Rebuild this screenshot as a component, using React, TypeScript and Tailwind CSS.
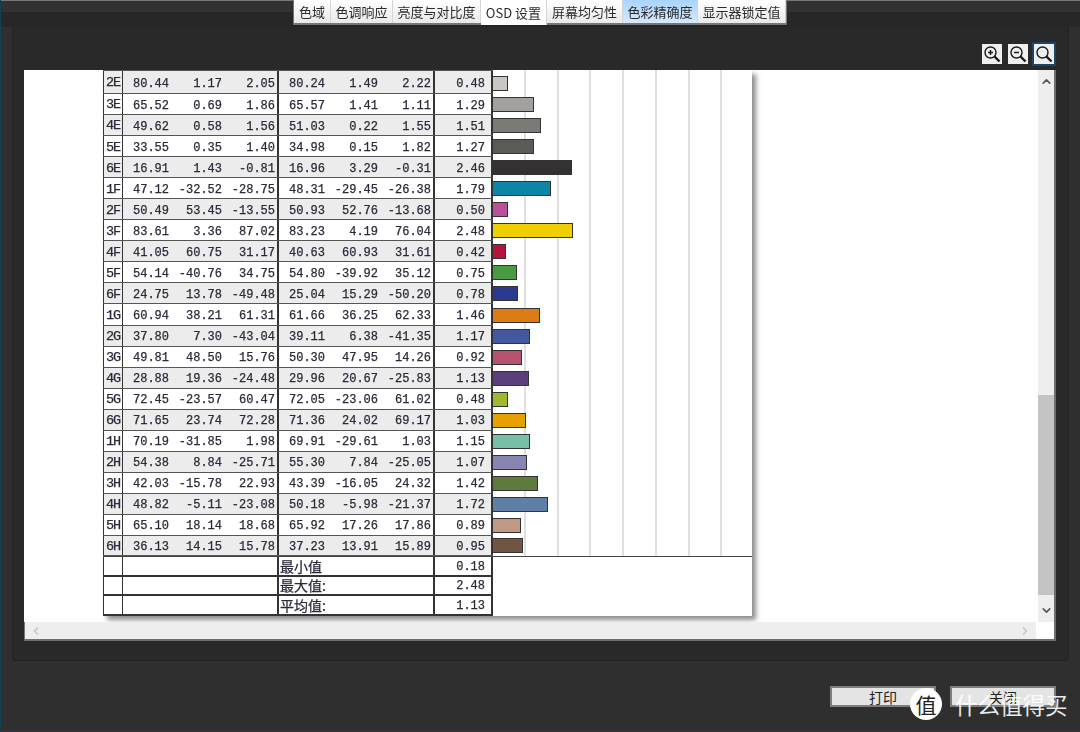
import { ChevronDown, ChevronLeft, ChevronRight, ChevronUp } from 'lucide-react';

const tabs = [
  { label: '色域', w: 37 },
  { label: '色调响应', w: 62 },
  { label: '亮度与对比度', w: 88 },
  { label: 'OSD 设置', w: 66, active: true },
  { label: '屏幕均匀性', w: 76 },
  { label: '色彩精确度', w: 75, hot: true },
  { label: '显示器锁定值', w: 88 },
];

type Row = [string, string, string, string, string, string, string, string];

const rows: { r: Row; color: string }[] = [
  { r: ['2E', '80.44', '1.17', '2.05', '80.24', '1.49', '2.22', '0.48'], color: '#c9c6c3' },
  { r: ['3E', '65.52', '0.69', '1.86', '65.57', '1.41', '1.11', '1.29'], color: '#a3a09e' },
  { r: ['4E', '49.62', '0.58', '1.56', '51.03', '0.22', '1.55', '1.51'], color: '#7a7a77' },
  { r: ['5E', '33.55', '0.35', '1.40', '34.98', '0.15', '1.82', '1.27'], color: '#5a5a56' },
  { r: ['6E', '16.91', '1.43', '-0.81', '16.96', '3.29', '-0.31', '2.46'], color: '#333132' },
  { r: ['1F', '47.12', '-32.52', '-28.75', '48.31', '-29.45', '-26.38', '1.79'], color: '#0d85a6' },
  { r: ['2F', '50.49', '53.45', '-13.55', '50.93', '52.76', '-13.68', '0.50'], color: '#bb4f9c' },
  { r: ['3F', '83.61', '3.36', '87.02', '83.23', '4.19', '76.04', '2.48'], color: '#efcf00' },
  { r: ['4F', '41.05', '60.75', '31.17', '40.63', '60.93', '31.61', '0.42'], color: '#b5133c' },
  { r: ['5F', '54.14', '-40.76', '34.75', '54.80', '-39.92', '35.12', '0.75'], color: '#4a9a42' },
  { r: ['6F', '24.75', '13.78', '-49.48', '25.04', '15.29', '-50.20', '0.78'], color: '#2a3a8e' },
  { r: ['1G', '60.94', '38.21', '61.31', '61.66', '36.25', '62.33', '1.46'], color: '#dc7a14' },
  { r: ['2G', '37.80', '7.30', '-43.04', '39.11', '6.38', '-41.35', '1.17'], color: '#44589f' },
  { r: ['3G', '49.81', '48.50', '15.76', '50.30', '47.95', '14.26', '0.92'], color: '#b6516e' },
  { r: ['4G', '28.88', '19.36', '-24.48', '29.96', '20.67', '-25.83', '1.13'], color: '#5a3f7c' },
  { r: ['5G', '72.45', '-23.57', '60.47', '72.05', '-23.06', '61.02', '0.48'], color: '#9cba2c' },
  { r: ['6G', '71.65', '23.74', '72.28', '71.36', '24.02', '69.17', '1.03'], color: '#e6a000' },
  { r: ['1H', '70.19', '-31.85', '1.98', '69.91', '-29.61', '1.03', '1.15'], color: '#78bfa8' },
  { r: ['2H', '54.38', '8.84', '-25.71', '55.30', '7.84', '-25.05', '1.07'], color: '#8884b4' },
  { r: ['3H', '42.03', '-15.78', '22.93', '43.39', '-16.05', '24.32', '1.42'], color: '#5e7a3c' },
  { r: ['4H', '48.82', '-5.11', '-23.08', '50.18', '-5.98', '-21.37', '1.72'], color: '#5f7fa6' },
  { r: ['5H', '65.10', '18.14', '18.68', '65.92', '17.26', '17.86', '0.89'], color: '#c09a84' },
  { r: ['6H', '36.13', '14.15', '15.78', '37.23', '13.91', '15.89', '0.95'], color: '#715543' },
];

const summary = [
  ['最小值', '0.18'],
  ['最大值:', '2.48'],
  ['平均值:', '1.13'],
];

const gridLines = [32, 65, 97, 130, 163, 196, 228];

const ZoomIcon = ({ mark }: { mark?: 'plus' | 'minus' }) => (
  <svg width="18" height="18" viewBox="0 0 18 18" fill="none" stroke="#1a1a1a">
    <circle cx="7.5" cy="7.5" r="5.5" strokeWidth="1.4" />
    <path d="M11.5 11.5L16.5 16.5" strokeWidth="2.4" />
    {mark && <path d="M5 7.5H10" strokeWidth="1.5" />}
    {mark === 'plus' && <path d="M7.5 5V10" strokeWidth="1.5" />}
  </svg>
);

const Num = ({ w, children }: { w: string; children: string }) => (
  <span className={`${w} text-right`}>{children}</span>
);

export default function App() {
  return (
    <div className="relative flex h-[732px] w-[1080px] flex-col overflow-hidden border-b border-l border-[#123f52] bg-[#2f2f2f] font-['Noto_Sans_CJK_SC',sans-serif]">
      <div className="flex h-[27px] border-t border-[#777] bg-[linear-gradient(#323232_11px,#272727_11px)] pl-[292px]">
        <div className="-mt-px flex h-[25px] items-stretch border-b-2 border-l border-r border-[#777] shadow-[0_1px_1px_#222] blur-[0.3px]">
          {tabs.map((t) => (
            <div
              key={t.label}
              style={{ width: t.w }}
              className={
                'flex items-center justify-center border-r border-[#d5d5d5] text-[13px] leading-none text-[#2a2a2a] ' +
                (t.active ? 'h-[25px] bg-white' : t.hot ? 'bg-gradient-to-b from-[#a9d4fb] to-[#d5e9fc]' : 'bg-gradient-to-b from-[#ffffff] to-[#e9e9e9]')
              }
            >
              {t.label}
            </div>
          ))}
        </div>
      </div>

      <div className="mx-[11px] flex h-[634px] flex-col rounded-b-[4px] border border-t-0 border-[#232323] bg-[#292929]">
        <div className="flex h-[43px] items-end justify-end gap-[6px] pb-[6px] pr-[14px]">
          <div className="flex h-[20px] w-[20px] items-center justify-center bg-[#efefef]"><ZoomIcon mark="plus" /></div>
          <div className="flex h-[20px] w-[20px] items-center justify-center bg-[#efefef]"><ZoomIcon mark="minus" /></div>
          <div className="flex h-[20px] w-[20px] items-center justify-center bg-[#efefef] outline-2 outline-[#1d4466]"><ZoomIcon /></div>
        </div>

        <div className="ml-[11px] mr-[12px] flex h-[571px] flex-col border-b-2 border-r-2 border-[#6e6e6e] bg-white">
          <div className="flex h-[552px]">
            <div className="relative min-w-0 flex-1 overflow-hidden bg-white pl-[79px]">
              <div className="relative w-[649px] shadow-[4px_4px_5px_rgba(0,0,0,0.45)]">
                <div className="absolute bottom-0 left-[389px] top-0 w-[260px]">
                  {gridLines.map((x) => (
                    <div key={x} style={{ left: x }} className="absolute bottom-[59px] top-0 w-[2px] bg-[#e0e0e0]" />
                  ))}
                </div>
                <div className="relative font-['Liberation_Mono','Noto_Sans_CJK_SC',monospace] text-[12px] text-[#2a2a3a] blur-[0.3px] [-webkit-text-stroke:0.25px_#2a2a3a]">
                  {rows.map(({ r, color }, i) => (
                    <div
                      key={r[0]}
                      style={{ height: i === 0 ? 24 : 21.05 }}
                      className={'flex ' + (i === rows.length - 1 ? 'border-b-[1.5px] border-[#444]' : '')}
                    >
                      <div className={'flex w-[390px] border-b-[1.5px] border-[#555] ' + (i === 0 ? 'border-t-[1.5px] ' : '') + (i % 2 === 0 ? 'bg-[#ececec]' : 'bg-white')}>
                        <span className="flex w-[20px] items-center justify-center border-l-[1.5px] border-r-[1.5px] border-[#333] pt-[3px] text-[13.5px] tracking-[-1px]">{r[0]}</span>
                        <div className="flex w-[156px] items-center border-r-2 border-[#333] pt-[3px]">
                          <Num w="w-[46px]">{r[1]}</Num>
                          <Num w="w-[53px]">{r[2]}</Num>
                          <Num w="w-[53px]">{r[3]}</Num>
                        </div>
                        <div className="flex w-[156px] items-center border-r-2 border-[#333] pt-[3px]">
                          <Num w="w-[46px]">{r[4]}</Num>
                          <Num w="w-[53px]">{r[5]}</Num>
                          <Num w="w-[53px]">{r[6]}</Num>
                        </div>
                        <div className="flex w-[58px] items-center justify-end border-r-2 border-[#333] pr-[6px] pt-[3px]">{r[7]}</div>
                      </div>
                      <div className="flex flex-1 items-end pb-[3px]">
                        <div
                          style={{ width: parseFloat(r[7]) * 32.7, backgroundColor: color }}
                          className="-ml-[1px] h-[15px] border-[1.5px] border-[#333]"
                        />
                      </div>
                    </div>
                  ))}
                  {summary.map(([label, val]) => (
                    <div key={label} className="flex h-[19.5px]">
                      <div className="flex w-[390px] border-b-2 border-[#333]">
                        <span className="w-[20px] border-l-[1.5px] border-r-[1.5px] border-[#333]" />
                        <span className="w-[156px] border-r-2 border-[#333]" />
                        <span className="flex w-[156px] items-center border-r-2 border-[#333] pl-[1px] font-['Noto_Sans_CJK_SC',sans-serif] text-[14px] leading-none">{label}</span>
                        <span className="flex w-[58px] items-center justify-end border-r-2 border-[#333] pr-[6px] pt-[2px]">{val}</span>
                      </div>
                      <div className="flex-1 bg-white" />
                    </div>
                  ))}
                </div>
              </div>
            </div>
            <div className="relative flex w-[16px] flex-col items-center justify-between bg-[#eeeeee] py-[5px]">
              <ChevronUp size={13} strokeWidth={3} className="text-[#555]" />
              <div className="absolute left-0 top-[325px] h-[200px] w-full bg-[#c4c4c4]" />
              <ChevronDown size={13} strokeWidth={3} className="text-[#555]" />
            </div>
          </div>
          <div className="flex h-[17px]">
            <div className="flex flex-1 items-center justify-between border-l-[1.5px] border-[#777] bg-[#eeeeee] px-[5px]">
              <ChevronLeft size={12} strokeWidth={3} className="text-[#c4c4c4]" />
              <ChevronRight size={12} strokeWidth={3} className="text-[#c4c4c4]" />
            </div>
            <div className="w-[18px] bg-white" />
          </div>
        </div>
      </div>

      <div className="flex justify-end gap-[14px] pr-[24px] pt-[25px]">
        <button className="h-[21px] w-[106px] border-2 border-[#7d7d7d] bg-[#e4e4e4] text-[14px] leading-none text-[#222]">打印</button>
        <button className="h-[21px] w-[106px] border-2 border-[#7d7d7d] bg-[#e4e4e4] text-[14px] leading-none text-[#222]">关闭</button>
      </div>

      {/* watermark */}
      <div className="absolute left-[909px] top-[688px] flex items-center gap-[13px]">
        <div className="flex h-[32px] w-[32px] items-center justify-center rounded-full bg-white text-[21px] leading-none text-[#222]">值</div>
        <span className="whitespace-nowrap text-[22.5px] leading-none text-white/90">什么值得买</span>
      </div>
    </div>
  );
}
